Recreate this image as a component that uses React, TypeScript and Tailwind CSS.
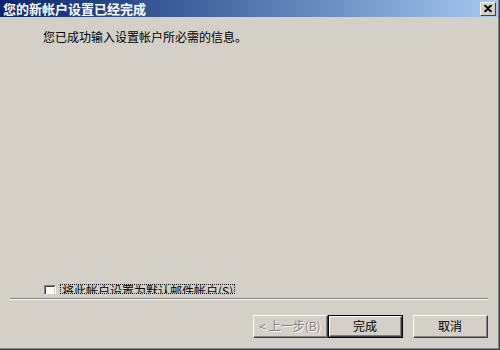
import React from 'react';

const font = { fontFamily: '"Noto Sans CJK SC", "Liberation Sans", sans-serif' };

const Btn = ({ children, isDefault, disabled, className = '' }: { children: React.ReactNode; isDefault?: boolean; disabled?: boolean; className?: string }) => (
    <div className={`${isDefault ? 'border border-black' : ''} ${className}`}>
        <div className="border-t border-l border-white border-r border-b border-r-[#404040] border-b-[#404040]">
            <div
                className={`flex items-center justify-center border-r border-b border-[#808080] bg-[#d4d0c8] text-[12px] leading-none ${
                    isDefault ? 'h-[19px]' : 'h-[21px]'
                } ${disabled ? 'text-[#808080] [text-shadow:1px_1px_0_#fff]' : 'text-black'}`}
            >
                {children}
            </div>
        </div>
    </div>
);

export default function App() {
    return (
        <div className="w-[500px] h-[350px] bg-[#d4d0c8] border-r border-b border-[#404040] overflow-hidden" style={font}>
            <div className="h-full border-r border-b border-[#808080] flex flex-col">
                {/* Title bar */}
                <div className="h-[17px] flex items-center justify-between pl-[3px] pr-[2px] bg-gradient-to-r from-[#0a246a] to-[#a6caf0]">
                    <span className="text-white font-bold text-[13px] leading-none">您的新帐户设置已经完成</span>
                    <div className="w-[16px] h-[14px] bg-[#d4d0c8] border-t border-l border-white border-r border-b border-r-[#404040] border-b-[#404040] flex items-center justify-center">
                        <svg width="8" height="7" viewBox="0 0 8 7">
                            <path d="M0 0h2l2 2 2-2h2v1L5 3.5 8 6v1H6L4 5 2 7H0V6l3-2.5L0 1z" fill="#000" />
                        </svg>
                    </div>
                </div>

                {/* Body */}
                <div className="flex-1 flex flex-col">
                    <p className="pl-[43px] pt-[13px] text-[12px] leading-[14px] text-black">您已成功输入设置帐户所必需的信息。</p>

                    <div className="flex-1" />

                    {/* checkbox row, bottom part clipped as in the wizard */}
                    <div className="flex items-start pl-[44px] h-[10px] mb-[4px] overflow-hidden">
                        <div className="mt-[1px] shrink-0 w-[12px] h-[12px] border-t border-l border-[#808080] border-r border-b border-r-white border-b-white">
                            <div className="w-full h-full bg-white border-t border-l border-[#404040] border-r border-b border-r-[#d4d0c8] border-b-[#d4d0c8]" />
                        </div>
                        <div className="ml-[4px] h-[10px] border border-dotted border-black overflow-hidden px-[1px]">
                            <div className="text-[12px] leading-[14px] text-black whitespace-nowrap -mt-[1px]">将此帐户设置为默认邮件帐户(S)</div>
                        </div>
                    </div>

                    <div className="mx-[10px] border-t border-[#808080] border-b border-b-white" />

                    <div className="flex justify-end pr-[10px] pt-[15px] pb-[10px]">
                        <Btn disabled className="w-[75px]">&lt; 上一步(B)</Btn>
                        <Btn isDefault className="w-[75px]">完成</Btn>
                        <Btn className="w-[75px] ml-[10px]">取消</Btn>
                    </div>
                </div>
            </div>
        </div>
    );
}
